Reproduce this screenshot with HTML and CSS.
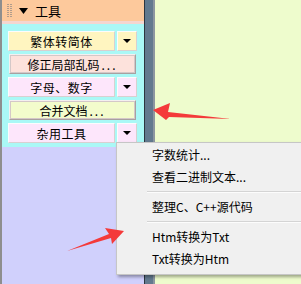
FILE: index.html
```html
<!DOCTYPE html>
<html lang="zh-CN">
<head>
  <meta charset="UTF-8">
  <title>工具</title>
  <link rel="stylesheet" href="styles.css">
</head>
<body>
  <div class="app">
    <aside class="panel">
      <div class="panel-head">
        <svg class="grip" width="6" height="14" viewBox="0 0 6 14">
          <g fill="#b09c8c">
            <rect x="0" y="0" width="2" height="1"/><rect x="3" y="0" width="2" height="1"/>
            <rect x="0" y="2" width="2" height="1"/><rect x="3" y="2" width="2" height="1"/>
            <rect x="0" y="4" width="2" height="1"/><rect x="3" y="4" width="2" height="1"/>
            <rect x="0" y="6" width="2" height="1"/><rect x="3" y="6" width="2" height="1"/>
            <rect x="0" y="8" width="2" height="1"/><rect x="3" y="8" width="2" height="1"/>
            <rect x="0" y="10" width="2" height="1"/><rect x="3" y="10" width="2" height="1"/>
            <rect x="0" y="12" width="2" height="1"/><rect x="3" y="12" width="2" height="1"/>
          </g>
        </svg>
        <svg class="caret" width="9" height="6" viewBox="0 0 9 6"><polygon points="0,0 9,0 4.5,6" fill="#000"/></svg>
        <span class="head-title">工具</span>
      </div>
      <div class="panel-band"></div>
      <div class="tools">
        <div class="split">
          <button class="btn yellow">繁体转简体</button>
          <button class="drop yellow"><span class="tri"></span></button>
        </div>
        <button class="btn wide salmon">修正局部乱码<span class="dots">...</span></button>
        <div class="split">
          <button class="btn pink">字母、数字</button>
          <button class="drop pink"><span class="tri"></span></button>
        </div>
        <button class="btn wide lime">合并文档<span class="dots">...</span></button>
        <div class="split">
          <button class="btn pink">杂用工具</button>
          <button class="drop pink"><span class="tri"></span></button>
        </div>
      </div>
      <div class="panel-rest"></div>
    </aside>
    <div class="splitter"></div>
    <main class="editor"></main>
  </div>

  <ul class="menu">
    <li>字数统计...</li>
    <li>查看二进制文本...</li>
    <li class="sep"></li>
    <li>整理C、C++源代码</li>
    <li class="sep"></li>
    <li>Htm转换为Txt</li>
    <li>Txt转换为Htm</li>
  </ul>

  <svg class="marks" width="301" height="284" viewBox="0 0 301 284">
    <polygon points="153,110 170,103 168,112 231,119 169,117 166,120" fill="#f43a3a"/>
    <polygon points="124,231 105,228 109,234 67,251 111,238 112,244" fill="#f43a3a"/>
  </svg>
</body>
</html>
```

FILE: styles.css
```css
* {
  box-sizing: border-box;
  margin: 0;
  padding: 0;
}
html, body {
  width: 301px;
  height: 284px;
  overflow: hidden;
}
body {
  font-family: "Noto Sans CJK SC", "Liberation Sans", sans-serif;
  font-size: 12px;
  color: #000;
  position: relative;
}
.app {
  display: flex;
  height: 284px;
}
.panel {
  width: 144px;
  display: flex;
  flex-direction: column;
  border-left: 2px solid #8e8e8e;
}
.panel-head {
  height: 21px;
  background: #fdc99c;
  display: flex;
  align-items: center;
  padding-left: 5px;
}
.grip {
  display: block;
  margin-top: 1px;
}
.caret {
  display: block;
  margin-left: 6px;
  margin-top: 1px;
}
.head-title {
  margin-left: 7px;
  font-size: 13px;
  line-height: 21px;
}
.panel-band {
  height: 3px;
  background: #f4d6d0;
}
.tools {
  background: #aaf8f6;
  padding: 7px 7px 4px 6px;
  display: flex;
  flex-direction: column;
  gap: 3px;
}
.split {
  display: flex;
  gap: 2px;
  height: 20px;
}
button {
  font-family: inherit;
  font-size: 12px;
  color: #000;
  height: 20px;
  border: 1px solid;
  border-color: #fcfcfc #d8d0d0 #d8d0d0 #fcfcfc;
  display: flex;
  align-items: center;
  justify-content: center;
}
.split .btn {
  width: 107px;
  letter-spacing: 0.5px;
}
.dots {
  letter-spacing: 2px;
  margin-left: 2px;
}
.drop {
  width: 20px;
}
.wide {
  width: 127px;
  margin-left: 1px;
  border-color: #f4f0f0 #a8a0a0 #a8a0a0 #f4f0f0;
  outline: 1px solid #d4c8c8;
  outline-offset: -2px;
}
.tri {
  width: 0;
  height: 0;
  border-left: 4px solid transparent;
  border-right: 4px solid transparent;
  border-top: 4px solid #000;
}
.yellow { background: #fff5c0; }
.salmon { background: #fde2dc; }
.pink { background: #fde6fb; }
.lime { background: #f3fccc; }
.panel-rest {
  flex: 1;
  background: #d0d0fc;
}
.splitter {
  width: 11px;
  background: #62798e;
  border-left: 1px solid #2c3640;
  border-right: 2px solid #8c96a0;
}
.editor {
  flex: 1;
  background: #eefccd;
}
.menu {
  position: absolute;
  left: 116px;
  top: 142px;
  width: 190px;
  height: 133px;
  background: #f0f0f0;
  border: 1px solid #c6c6c6;
  box-shadow: 2px 2px 3px rgba(0, 0, 0, 0.35);
  list-style: none;
  padding-top: 1px;
}
.menu li {
  height: 22px;
  line-height: 22px;
  padding-left: 35px;
  white-space: nowrap;
}
.menu li.sep {
  height: 8px;
  margin-left: 30px;
  padding: 0;
  background: linear-gradient(#f0f0f0 3px, #d4d4d4 3px, #d4d4d4 4px, #fcfcfc 4px, #fcfcfc 5px, #f0f0f0 5px);
}
.marks {
  position: absolute;
  left: 0;
  top: 0;
  pointer-events: none;
}
```
